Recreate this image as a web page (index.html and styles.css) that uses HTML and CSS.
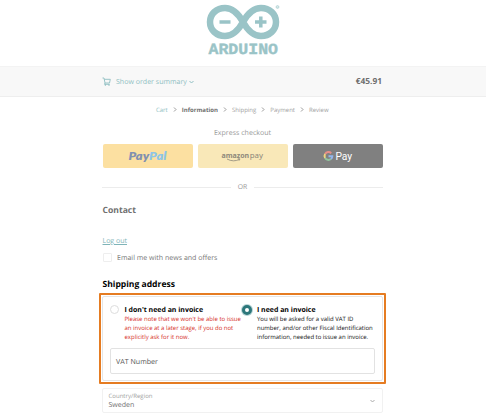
FILE: index.html
```
<!DOCTYPE html>
<html lang="en">
<head>
<meta charset="utf-8">
<title>Arduino checkout</title>
<link rel="stylesheet" href="styles.css">
</head>
<body>
<header class="brand">
  <svg class="logo" viewBox="0 0 80 60" role="img" aria-label="Arduino">
    <g fill="none" stroke="#9ac4c7" stroke-width="6.500">
      <path d="M42 22C37 13 31 8 24 8C15.500 8 9 14 9 22S15.500 36 24 36C31 36 37 31 42 22C47 13 53 8 60 8C68.500 8 75 14 75 22S68.500 36 60 36C53 36 47 31 42 22Z"/>
      <path d="M18.500 22H29.500M54 22H65.500M59.800 16.500V27.500" stroke-width="3.500"/>
    </g>
    <text class="logo-name" x="7.500" y="54.300" textLength="69.500" lengthAdjust="spacingAndGlyphs">ARDUINO</text>
    <circle cx="76.500" cy="7" r="1.400" fill="none" stroke="#9ac4c7" stroke-width=".7"/>
    <circle cx="76.500" cy="7" r=".5" fill="#9ac4c7"/>
  </svg>
</header>
<section class="summary">
  <a class="summary-link">
    <svg class="cart" viewBox="0 0 9 9"><path d="M.5 1H2L3 6H7.500L8.300 2.300H2.300M3 6L2.500 7.300H7.500"/><circle cx="3.300" cy="8" r=".4"/><circle cx="7" cy="8" r=".4"/></svg>
    <span class="summary-text">Show order summary</span>
    <svg class="chevron" viewBox="0 0 5 4"><path d="M.5 1L2.500 3L4.500 1"/></svg>
  </a>
  <strong class="total">€45.91</strong>
</section>
<main class="page">
  <nav class="crumbs">
    <a class="crumb-link">Cart</a>
    <svg class="sep" viewBox="0 0 4 5"><path d="M1 .5L3 2.500L1 4.500"/></svg>
    <b class="crumb-current">Information</b>
    <svg class="sep" viewBox="0 0 4 5"><path d="M1 .5L3 2.500L1 4.500"/></svg>
    <span>Shipping</span>
    <svg class="sep" viewBox="0 0 4 5"><path d="M1 .5L3 2.500L1 4.500"/></svg>
    <span>Payment</span>
    <svg class="sep" viewBox="0 0 4 5"><path d="M1 .5L3 2.500L1 4.500"/></svg>
    <span>Review</span>
  </nav>
  <p class="express">Express checkout</p>
  <div class="wallets">
    <button class="wallet paypal" aria-label="PayPal">
      <svg viewBox="0 0 90 24"><text class="paypal-name" x="25.500" y="15.500" textLength="38" lengthAdjust="spacingAndGlyphs"><tspan fill="#8190b0">Pay</tspan><tspan fill="#8ec5e6">Pal</tspan></text></svg>
    </button>
    <button class="wallet amazon" aria-label="Amazon Pay">
      <svg viewBox="0 0 90 24"><text class="amazon-name amazon-bold" x="23.500" y="13.800">amazon</text><text class="amazon-name" x="51.700" y="13.800">pay</text><path d="M29 15Q35.500 18.500 41.500 15.300M39.800 14.700L42 14.900L41 16.700" fill="none" stroke="#8e897b" stroke-width=".8"/></svg>
    </button>
    <button class="wallet google" aria-label="Google Pay">
      <svg viewBox="0 0 90 24">
        <g fill="none" stroke-width="2">
          <path d="M38.200 9.200A3.900 3.900 0 0 0 32.100 10" stroke="#e88f89"/>
          <path d="M32.100 10A3.900 3.900 0 0 0 32.100 14" stroke="#eed47f"/>
          <path d="M32.100 14A3.900 3.900 0 0 0 37.900 15" stroke="#91c69e"/>
          <path d="M37.900 15A3.900 3.900 0 0 0 39.300 12.200H35.500" stroke="#92b6ed"/>
        </g>
        <text class="google-name" x="42.400" y="15.700" textLength="16.800" lengthAdjust="spacingAndGlyphs">Pay</text>
      </svg>
    </button>
  </div>
  <div class="divider"><span>OR</span></div>
  <h2 class="contact">Contact</h2>
  <a class="logout">Log out</a>
  <label class="news"><i class="checkbox"></i><span>Email me with news and offers</span></label>
  <h2 class="shipping">Shipping address</h2>
  <section class="highlight">
    <div class="card">
      <div class="options">
        <div class="option">
          <i class="radio"></i>
          <div><h3>I don't need an invoice</h3><p class="warning">Please note that we won't be able to issue<br>an invoice at a later stage, if you do not<br>explicitly ask for it now.</p></div>
        </div>
        <div class="option">
          <i class="radio checked"></i>
          <div><h3>I need an invoice</h3><p class="note">You will be asked for a valid VAT ID<br>number, and/or other Fiscal Identification<br>information, needed to issue an invoice.</p></div>
        </div>
      </div>
      <div class="vat"><span>VAT Number</span></div>
    </div>
  </section>
  <div class="country">
    <div><small>Country/Region</small><span class="value">Sweden</span></div>
    <svg class="chevron" viewBox="0 0 5 4"><path d="M.5 1L2.500 3L4.500 1"/></svg>
  </div>
</main>
</body>
</html>
```
FILE: styles.css
```
* { box-sizing: border-box; }
body {
  margin: 0;
  height: 416px;
  overflow: hidden;
  background: #fff;
  color: #999;
  font-family: "Open Sans", sans-serif;
  font-size: 7px;
  white-space: nowrap;
  text-rendering: geometricPrecision;
}
h2, h3, p { margin: 0; }
svg { display: block; }
.brand { height: 66px; padding-left: 201px; }
.logo { width: 80px; height: 60px; }
.logo-name { font: bold 15.500px "Liberation Mono", monospace; fill: #9ac4c7; stroke: #9ac4c7; stroke-width: .4px; }
.summary {
  height: 31px;
  padding: 0 104px 0 102px;
  display: flex;
  align-items: center;
  justify-content: space-between;
  background: #f8f8f8;
  border-top: 1px solid #f3f3f3;
  border-bottom: 1px solid #eee;
}
.summary-link { display: flex; align-items: center; color: #8ebec2; }
.cart { width: 9px; height: 9px; margin-right: 5px; fill: none; stroke: #8ebec2; stroke-width: .9; }
.summary-text { padding-top: 1px; font-size: 7.050px; line-height: 10px; }
.chevron { width: 5px; height: 4px; margin: 1px 0 0 2px; fill: none; stroke: #8ebec2; stroke-width: 1; }
.total { padding-top: 1px; color: #6f6f6f; font-size: 8.400px; line-height: 12px; }
.page { width: 281px; margin-left: 102px; display: flex; flex-direction: column; }
.crumbs {
  height: 9px;
  margin: 8px 0 0 54px;
  display: flex;
  align-items: center;
  gap: 5px;
  font-size: 6px;
  line-height: 9px;
  color: #9e9e9e;
}
.crumbs > a, .crumbs > b, .crumbs > span { padding-top: 1px; }
.crumb-link { color: #8ebec2; }
.crumb-current { color: #707070; }
.sep { width: 4px; height: 5px; fill: none; stroke: #909090; stroke-width: .9; }
.express { margin-top: 14px; height: 10px; line-height: 10px; font-size: 7.050px; text-align: center; }
.wallets { display: flex; gap: 5px; height: 24px; margin: 6px 0 0 .5px; }
.wallet { flex: 1; padding: 0; border: 0; border-radius: 2px; }
.wallet svg { width: 90px; height: 24px; }
.paypal { background: #fce0a1; }
.amazon { background: #f9e8b8; }
.google { background: #808080; }
.paypal-name { font: italic 800 10.500px Lato, sans-serif; }
.amazon-name { font: 7.900px "Noto Sans", sans-serif; fill: #8e897b; }
.amazon-bold { font-weight: bold; font-size: 7px; }
.google-name { font: 10.800px Roboto, sans-serif; fill: #fff; }
.divider { height: 10px; margin-top: 14px; display: flex; align-items: center; gap: 7px; font-size: 6.800px; line-height: 10px; }
.divider::before, .divider::after { content: ""; flex: 1; height: 1px; background: #ececec; }
.contact { margin: 12px 0 0 .5px; height: 12px; line-height: 12px; font-size: 8.600px; color: #707070; }
.logout { align-self: flex-start; margin: 20px 0 0 .5px; height: 11px; line-height: 11px; font-size: 7px; color: #7fb4b8; text-decoration: underline; }
.news { height: 11px; margin-top: 5px; display: flex; align-items: center; gap: 5px; color: #777; font-size: 7.050px; line-height: 10px; }
.news span { padding-top: 1px; }
.checkbox { width: 9px; height: 9px; margin-left: 1px; border: 1px solid #eee; border-radius: 1px; }
.shipping { margin: 15px 0 0 .5px; height: 12px; line-height: 12px; font-size: 8.550px; color: #000; }
.highlight { width: 287px; height: 91px; margin: 3px 0 0 -3px; padding: 1px; border: 2px solid #e57c22; border-radius: 1px; }
.card { height: 85px; padding: 8px 7px; border: 1px solid #e6e6e6; border-radius: 2px; }
.options { display: grid; grid-template-columns: 132px 133px; height: 43px; }
.option { display: flex; gap: 5px; }
.option > div { margin-left: .5px; }
.option .checked + div { margin-left: 0; }
.radio { width: 9px; height: 9px; flex: none; border: 1px solid #ddd; border-radius: 50%; }
.radio.checked { width: 10px; height: 10px; border: 3px solid #2d777b; background: #fff; box-shadow: 0 0 0 1px #b8d4d6; }
.option h3 { height: 9.500px; padding-top: .5px; line-height: 9px; font-size: 6.980px; color: #000; }
.option p { font-size: 5.980px; line-height: 9px; }
.warning { color: #d52d25; }
.note { color: #111; }
.vat { width: 265px; height: 26px; padding: 1px 0 0 5px; display: flex; align-items: center; border: 1px solid #e2e2e2; border-radius: 2px; color: #555; font-size: 7.100px; }
.country { height: 25px; margin-top: 4px; padding: 0 7px 0 5.500px; display: flex; align-items: center; justify-content: space-between; border: 1px solid #f1f1f1; border-radius: 2px; }
.country small { display: block; font-size: 6.050px; line-height: 8px; color: #a0a0a0; }
.value { display: block; padding-top: 1px; font-size: 7.050px; line-height: 9px; color: #707070; }
.country .chevron { margin-top: 0; stroke: #aaa; }
```
